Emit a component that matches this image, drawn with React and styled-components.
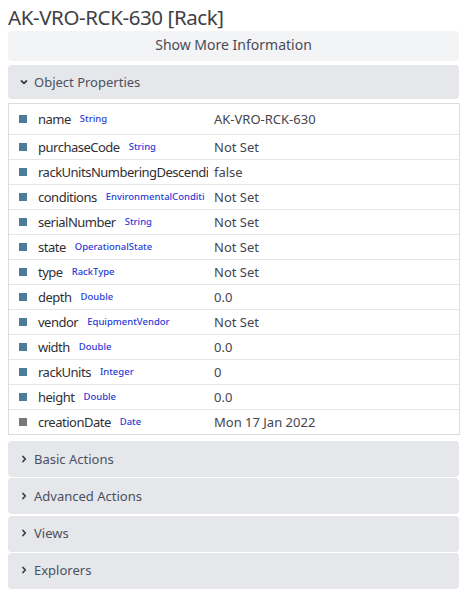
import React from "react";
import styled, { createGlobalStyle } from "styled-components";

const Global = createGlobalStyle`
  html, body { margin: 0; padding: 0; background: #fff; }
  body { font-family: "Noto Sans", "Open Sans", sans-serif; }
  * { box-sizing: border-box; }
`;

const Page = styled.div`
  padding: 5px 3px 0 8px;
  display: flex;
  flex-direction: column;
`;

const Title = styled.h1`
  margin: 0 0 2px 0;
  font-size: 20.5px;
  font-weight: 400;
  letter-spacing: -0.4px;
  line-height: 24px;
  color: #3f3f46;
`;

const MoreButton = styled.button`
  height: 30px;
  border: none;
  border-radius: 4px;
  background: #f3f4f6;
  color: #4b4b55;
  font-family: inherit;
  font-size: 14px;
  padding: 0 0 3px 0;
  margin-bottom: 4px;
  cursor: pointer;
`;

const SectionHeader = styled.div`
  display: flex;
  align-items: center;
  gap: 4px;
  height: ${(p) => p.$h || 36}px;
  padding: 0 0 1px 10px;
  background: #e5e7eb;
  border-radius: 4px;
  color: #4b5060;
  font-size: 13px;
  margin-bottom: ${(p) => p.$mb || 0}px;
`;

const Table = styled.div`
  border: 1px solid #dcdcdc;
  margin-bottom: 6px;
  margin-right: -1px;
`;

const Row = styled.div`
  display: grid;
  grid-template-columns: 195px 1fr;
  align-items: center;
  height: ${(p) => (p.$first ? 30 : 25)}px;
  border-top: ${(p) => (p.$first ? "none" : "1px solid #e4e6ea")};
  padding: 0 0 1px 10px;
`;

const NameCell = styled.div`
  display: flex;
  align-items: center;
  white-space: nowrap;
  overflow: hidden;
  margin-right: 6px;
`;

const Marker = styled.span`
  width: 8px;
  height: 8px;
  flex: none;
  background: ${(p) => p.$color};
  margin-right: 11px;
`;

const PropName = styled.span`
  font-size: 13px;
  letter-spacing: -0.5px;
  color: #2f2f35;
  margin-right: 9px;
  flex: none;
`;

const TypeTag = styled.span`
  font-size: 9.5px;
  font-weight: 500;
  color: #2b3bd6;
  flex: none;
`;

const Value = styled.div`
  font-size: 13px;
  color: #45454d;
`;

const Chevron = ({ down }) => (
  <svg width="12" height="12" viewBox="0 0 12 12" fill="none" stroke="#363a46" strokeWidth="1.7" strokeLinecap="round" strokeLinejoin="round">
    {down ? <path d="M3.5 5 L6 7.3 L8.5 5" /> : <path d="M5 3.5 L7.3 6 L5 8.5" />}
  </svg>
);

const props = [
  ["name", "String", "AK-VRO-RCK-630"],
  ["purchaseCode", "String", "Not Set"],
  ["rackUnitsNumberingDescendi", "", "false"],
  ["conditions", "EnvironmentalConditi", "Not Set"],
  ["serialNumber", "String", "Not Set"],
  ["state", "OperationalState", "Not Set"],
  ["type", "RackType", "Not Set"],
  ["depth", "Double", "0.0"],
  ["vendor", "EquipmentVendor", "Not Set"],
  ["width", "Double", "0.0"],
  ["rackUnits", "Integer", "0"],
  ["height", "Double", "0.0"],
  ["creationDate", "Date", "Mon 17 Jan 2022", "#787878"],
];

const sections = ["Basic Actions", "Advanced Actions", "Views", "Explorers"];

export default function App() {
  return (
    <>
      <Global />
      <Page>
        <Title>AK-VRO-RCK-630 [Rack]</Title>
        <MoreButton>Show More Information</MoreButton>
        <SectionHeader $h={34} $mb={4}>
          <Chevron down />
          Object Properties
        </SectionHeader>
        <Table>
          {props.map(([n, t, v, c], i) => (
            <Row key={n} $first={i === 0}>
              <NameCell>
                <Marker $color={c || "#4b7d9b"} />
                <PropName>{n}</PropName>
                {t && <TypeTag>{t}</TypeTag>}
              </NameCell>
              <Value>{v}</Value>
            </Row>
          ))}
        </Table>
        {sections.map((s) => (
          <SectionHeader key={s} $mb={1.3}>
            <Chevron />
            {s}
          </SectionHeader>
        ))}
      </Page>
    </>
  );
}
